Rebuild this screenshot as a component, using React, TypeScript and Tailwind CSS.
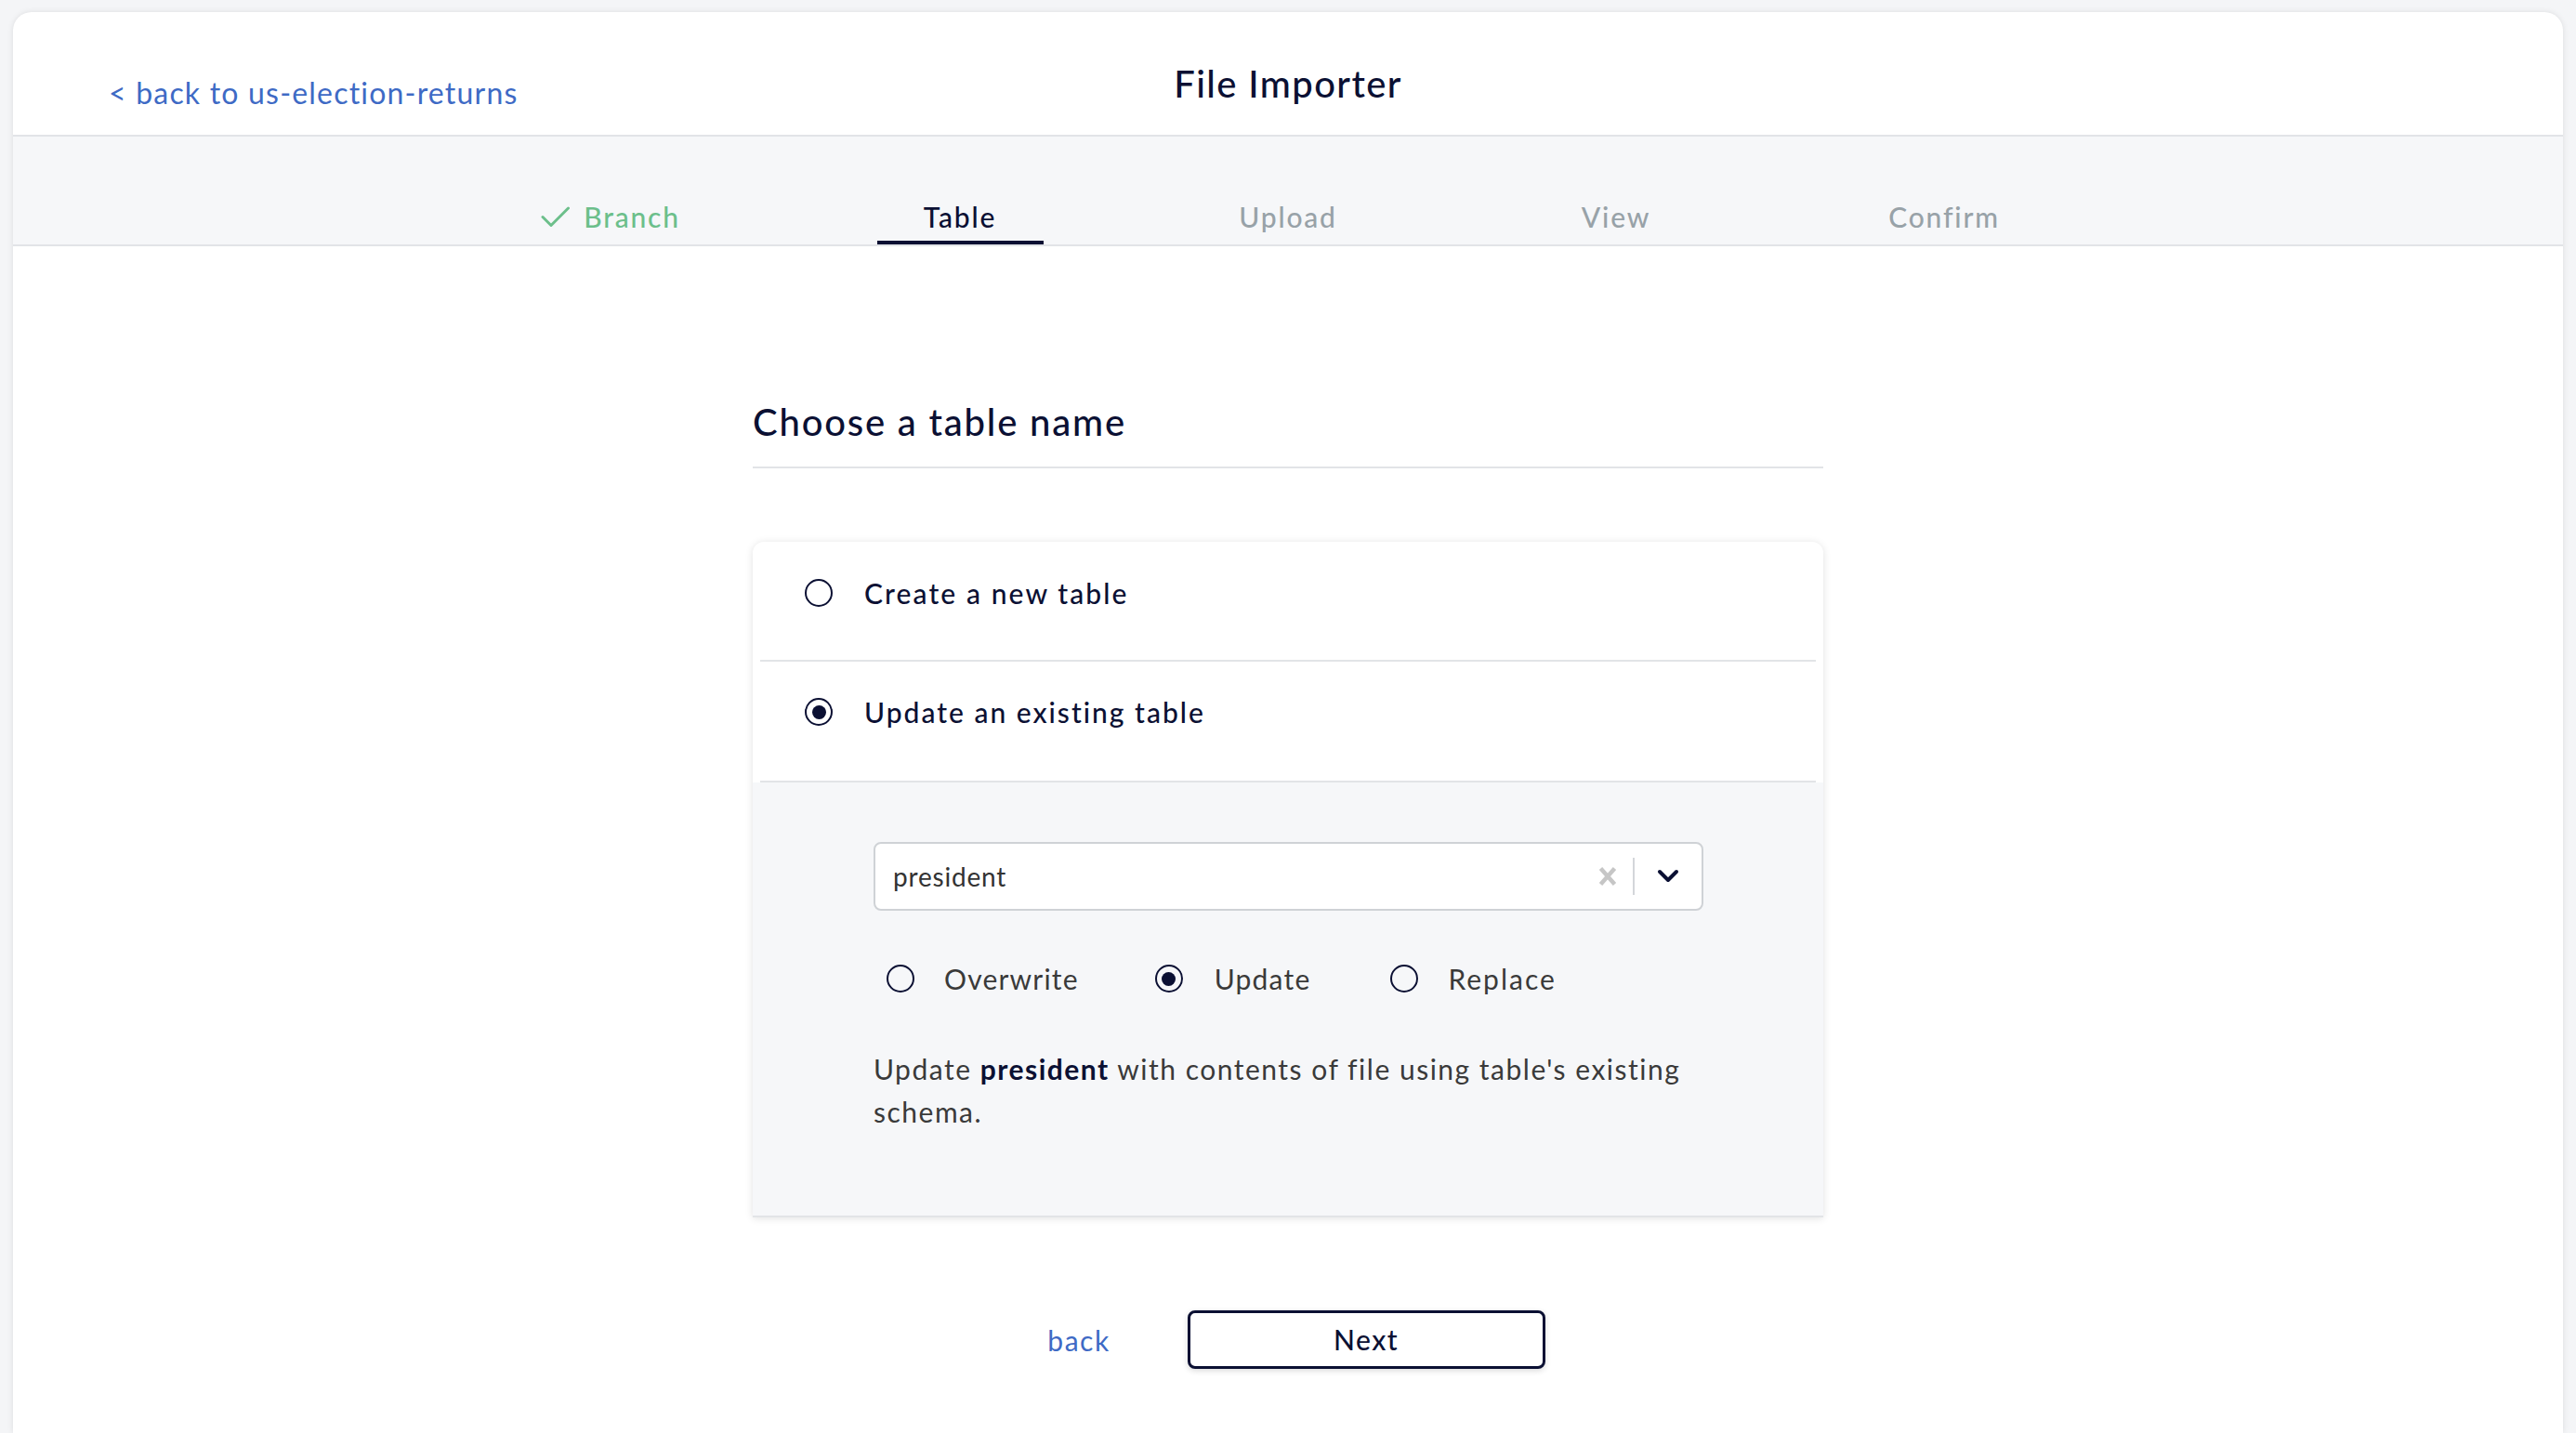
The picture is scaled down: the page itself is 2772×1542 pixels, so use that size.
import React from "react";

function Radio({ checked }: { checked?: boolean }) {
  return (
    <span className="flex h-[30px] w-[30px] shrink-0 items-center justify-center rounded-full border-[2.5px] border-[#0b1033] bg-transparent">
      {checked ? <span className="h-[15px] w-[15px] rounded-full bg-[#0b1033]" /> : null}
    </span>
  );
}

export default function App() {
  const tabs = [
    { label: "Branch", state: "done" },
    { label: "Table", state: "active" },
    { label: "Upload", state: "todo" },
    { label: "View", state: "todo" },
    { label: "Confirm", state: "todo" },
  ];
  return (
    <div
      className="min-h-screen bg-[#f4f5f7] px-[14px] pt-[13px]"
      style={{ fontFamily: "Lato, 'Open Sans', sans-serif" }}
    >
      <div className="min-h-[1529px] rounded-t-[20px] bg-white shadow-[0_0_6px_rgba(0,0,0,0.10)]">
        {/* header */}
        <div className="grid h-[134px] grid-cols-[1fr_auto_1fr] border-b-2 border-[#e2e4e7]">
          <div className="pl-[103px] pt-[67px]">
            <a className="text-[32px] leading-[40px] tracking-[1.2px] text-[#3e6ac5]">&lt; back to us-election-returns</a>
          </div>
          <div className="pt-[53px] text-[40px] font-medium leading-[48px] tracking-[1.4px] text-[#0b1033]">File Importer</div>
          <div />
        </div>

        {/* tabs */}
        <div className="flex h-[118px] items-end justify-center gap-[174px] border-b-2 border-[#e2e4e7] bg-[#f6f7f9]">
          {tabs.map((t) => (
            <div
              key={t.label}
              className={
                "flex w-[179px] justify-center border-b-4 pb-2 text-[30px] leading-[36px] tracking-[1.8px] " +
                (t.state === "active"
                  ? "border-[#0b1033] font-medium text-[#0b1033]"
                  : t.state === "done"
                  ? "border-transparent font-medium text-[#6cbf8b]"
                  : "border-transparent font-medium text-[#98a2a8]")
              }
            >
              <span className="relative">
                {t.state === "done" ? (
                  <svg
                    className="absolute left-[-46px] top-[7px]"
                    width="31"
                    height="23"
                    viewBox="0 0 31 23"
                    fill="none"
                  >
                    <path d="M2 11.5 L11 20.5 L29.5 2" stroke="#6cbf8b" strokeWidth="3" strokeLinecap="round" strokeLinejoin="round" />
                  </svg>
                ) : null}
                {t.label}
              </span>
            </div>
          ))}
        </div>

        {/* main */}
        <div className="flex flex-col items-center">
          <div className="w-[1152px] pt-[165px]">
            <h2 className="border-b-2 border-[#e2e4e7] pb-[24px] text-[40px] font-medium leading-[48px] tracking-[1.8px] text-[#0b1033]">
              Choose a table name
            </h2>

            <div className="mt-[79px] overflow-hidden rounded-t-[12px] bg-white shadow-[0_1px_8px_rgba(0,0,0,0.12)]">
              <div className="mx-2 flex h-[129px] items-start gap-[34px] border-b-2 border-[#e2e4e7] pl-[48px] pt-[35px]">
                <span className="pt-[5px]">
                  <Radio />
                </span>
                <span className="text-[30px] font-medium leading-[40px] tracking-[2.1px] text-[#0b1033]">Create a new table</span>
              </div>
              <div className="mx-2 flex h-[130px] items-start gap-[34px] border-b-2 border-[#e2e4e7] pl-[48px] pt-[34px]">
                <span className="pt-[5px]">
                  <Radio checked />
                </span>
                <span className="text-[30px] font-medium leading-[40px] tracking-[2px] text-[#0b1033]">Update an existing table</span>
              </div>

              <div className="border-b-2 border-[#e2e4e7] bg-[#f6f7f9] pb-[89px] pl-[130px] pt-[64px]">
                <div className="flex h-[74px] w-[893px] items-center rounded-lg border-2 border-[#cfd2d6] bg-white">
                  <span className="flex-1 pl-[19px] text-[28px] tracking-[0.8px] text-[#333333]">president</span>
                  <svg className="mr-[16px]" width="22" height="22" viewBox="0 0 22 22">
                    <path d="M3.5 2.5 L18.5 19.5 M18.5 2.5 L3.5 19.5" stroke="#c6c6c6" strokeWidth="4.5" strokeLinecap="butt" />
                  </svg>
                  <span className="h-[40px] w-[2px] bg-[#d4d6da]" />
                  <svg className="ml-[24px] mr-[24px]" width="24" height="16" viewBox="0 0 24 16">
                    <path d="M3 3 L12 12 L21 3" stroke="#0b1033" strokeWidth="4" fill="none" strokeLinecap="round" strokeLinejoin="round" />
                  </svg>
                </div>

                <div className="ml-[14px] mt-[53px] flex items-center text-[30px] leading-[40px] tracking-[1.2px] text-[#3a3a3a]">
                  <Radio />
                  <span className="ml-[32px]">Overwrite</span>
                  <span className="ml-[82px]">
                    <Radio checked />
                  </span>
                  <span className="ml-[34px]">Update</span>
                  <span className="ml-[86px]">
                    <Radio />
                  </span>
                  <span className="ml-[32px] tracking-[2px]">Replace</span>
                </div>

                <p className="mt-[54px] w-[893px] text-[30px] leading-[46px] tracking-[1.5px] text-[#3a3a3a]">
                  Update <b className="font-bold text-[#0b1033]">president</b> with contents of file using table's existing
                  <br />
                  schema.
                </p>
              </div>
            </div>

            <div className="ml-[18px] mt-[100px] flex items-center justify-center gap-[83px] pb-[60px]">
              <a className="text-[30px] leading-[40px] tracking-[1.5px] text-[#3e6ac5]">back</a>
              <button className="flex h-[63px] w-[385px] items-center justify-center rounded-lg border-[3px] border-[#0b1033] bg-white text-[30px] font-medium tracking-[1.5px] text-[#0b1033] shadow-[0_2px_6px_rgba(0,0,0,0.15)]">
                Next
              </button>
            </div>
          </div>
        </div>
      </div>
    </div>
  );
}
